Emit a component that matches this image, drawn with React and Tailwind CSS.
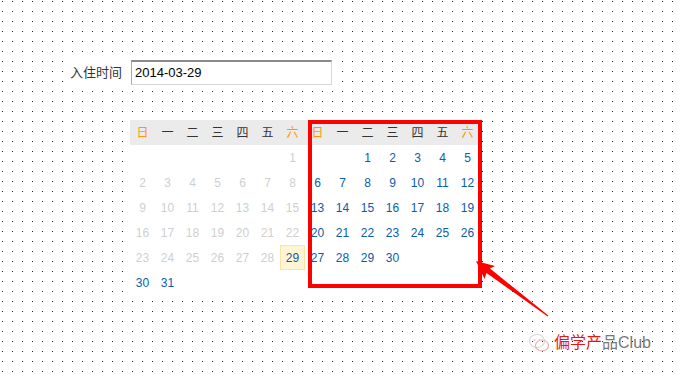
import React from "react";

const BLUE = "text-[#0b5cad]";

function Month({ cells }) {
  const heads = ["日", "一", "二", "三", "四", "五", "六"];
  return (
    <div className="w-[175px] flex flex-col">
      <div className="grid grid-cols-7 h-[25px] bg-[#ebebeb]">
        {heads.map((h, i) => (
          <div
            key={h}
            className={`flex items-center justify-center text-[12px] ${
              i === 0 || i === 6 ? "text-[#ff9900]" : "text-[#333333]"
            }`}
          >
            {h}
          </div>
        ))}
      </div>
      <div className="grid grid-cols-7 auto-rows-[25px]">
        {cells.map((c, i) => (
          <div
            key={i}
            className={`flex items-center justify-center text-[12px] ${
              c && c.hl
                ? "bg-[#fff5d4] border border-[#f9e3a6] " + BLUE
                : c && c.off
                ? "text-[#cfcfcf]"
                : BLUE
            }`}
          >
            {c ? c.d : ""}
          </div>
        ))}
      </div>
    </div>
  );
}

export default function App() {
  const march = [];
  for (let i = 0; i < 6; i++) march.push(null);
  for (let d = 1; d <= 31; d++) {
    march.push({ d, off: d < 29, hl: d === 29 });
  }
  const april = [null, null];
  for (let d = 1; d <= 30; d++) april.push({ d });

  return (
    <div
      className="relative w-[677px] h-[374px] overflow-hidden bg-white"
      style={{ fontFamily: '"Liberation Sans", "Noto Sans CJK SC", sans-serif' }}
    >
      <svg
        className="absolute left-0 top-0 pointer-events-none"
        width="677"
        height="374"
        shapeRendering="crispEdges"
      >
        <defs>
          <pattern id="dots" x="0" y="0" width="10" height="10" patternUnits="userSpaceOnUse">
            <rect x="2" y="1" width="1" height="1" fill="#0000ff" shapeRendering="crispEdges" />
          </pattern>
        </defs>
        <rect x="0" y="0" width="677" height="374" fill="url(#dots)" />
      </svg>

      <div className="relative ml-[65px] pt-[56px]">
        <div className="w-[275px] h-[33px] bg-white flex items-center">
          <span className="pl-[5px] w-[66px] text-[13px] text-[#333333]">入住时间</span>
          <div className="w-[201px] h-[25px] bg-white border-t-2 border-t-[#8a8a8a] border-l border-l-[#a9a9a9] border-r border-r-[#d6d6d6] border-b border-b-[#d6d6d6] flex items-center pl-[3px] text-[13px] text-black">
            2014-03-29
          </div>
        </div>
      </div>

      <div className="relative ml-[130px] mt-[31px] w-[350px] h-[175px] bg-white flex">
        <Month cells={march} />
        <Month cells={april} />
        <div className="absolute left-[178px] top-0 w-[174px] h-[168px] border-4 border-[#ff0000]" />
      </div>

      <svg
        className="absolute left-0 top-0 pointer-events-none"
        width="677"
        height="374"
        viewBox="0 0 677 374"
      >
        <polygon
          points="476,261 495,266 490,268.5 548.3,315.6 547.7,316.4 486.5,273 484.5,279"
          fill="#ff0000"
        />
      </svg>

      <div className="absolute left-[528px] top-[332px] flex items-center gap-[4px]">
        <svg width="22" height="22" viewBox="0 0 22 22">
          <ellipse cx="9" cy="9" rx="7.5" ry="6.5" fill="none" stroke="#d8d8d8" strokeWidth="1.2" />
          <ellipse cx="14" cy="13.5" rx="6.5" ry="5.5" fill="none" stroke="#e8b0b0" strokeWidth="1.2" />
          <circle cx="6.5" cy="8" r="1" fill="#cccccc" />
          <circle cx="11.5" cy="8" r="1" fill="#cccccc" />
        </svg>
        <span className="text-[16px] leading-none">
          <span className="text-[#e01818]">偏学产</span>
          <span className="text-[#777777]">品Club</span>
        </span>
      </div>
    </div>
  );
}
